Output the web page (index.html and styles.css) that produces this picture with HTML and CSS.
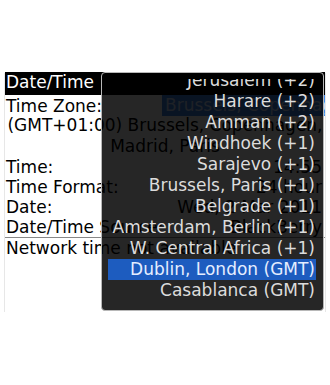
FILE: index.html
```html
<!DOCTYPE html>
<html>
<head>
<meta charset="utf-8">
<link rel="stylesheet" href="styles.css">
</head>
<body>
<div class="screen">
  <div class="title">Date/Time</div>
  <div class="row tz">
    <span class="label">Time Zone:</span>
    <span class="field">Brussels, Copenhagen, Madrid</span>
  </div>
  <div class="desc">(GMT+01:00) Brussels, Copenhagen, Madrid, Paris</div>
  <div class="row"><span class="label">Time:</span><span class="value">14:55</span></div>
  <div class="row"><span class="label">Time Format:</span><span class="value">24 hour</span></div>
  <div class="row"><span class="label">Date:</span><span class="value">Wed, 2 Mar 2011</span></div>
  <div class="row sep"><span class="label">Date/Time Source:</span><span class="value">BlackBerry</span></div>
  <div class="row"><span class="label">Network time not available</span></div>

  <div class="popup">
    <ul class="list">
      <li>Jerusalem (+2)</li>
      <li>Harare (+2)</li>
      <li>Amman (+2)</li>
      <li>Windhoek (+1)</li>
      <li>Sarajevo (+1)</li>
      <li>Brussels, Paris (+1)</li>
      <li>Belgrade (+1)</li>
      <li>Amsterdam, Berlin (+1)</li>
      <li>W. Central Africa (+1)</li>
      <li class="selected">Dublin, London (GMT)</li>
      <li>Casablanca (GMT)</li>
    </ul>
  </div>
</div>
</body>
</html>
```
FILE: styles.css
```css
html, body {
  margin: 0;
  padding: 0;
  background: #fff;
}
body {
  padding: 72px 0 0 5px;
  font-family: "DejaVu Sans", sans-serif;
  font-size: 17px;
  color: #000;
}
.screen {
  position: relative;
  width: 320px;
  height: 240px;
  background: #fff;
  overflow: hidden;
  box-shadow: 0 1px 1px rgba(0, 0, 0, 0.55);
}
.title {
  height: 23px;
  line-height: 20px;
  background: #000;
  color: #fff;
  padding-left: 1px;
}
.row {
  display: flex;
  justify-content: space-between;
  line-height: 20px;
  height: 20px;
  padding: 0 3px 0 0;
  white-space: nowrap;
}
.label {
  padding-left: 1px;
}
.value {
  text-align: right;
}
.tz {
  height: 21px;
  line-height: 21px;
  padding-right: 0;
}
.tz .label {
  padding-top: 1px;
}
.field {
  width: 163px;
  background: #3f86e8;
  color: #c8dcff;
  overflow: hidden;
  padding-left: 3px;
  box-sizing: border-box;
}
.desc {
  text-align: center;
  line-height: 21px;
  margin-top: -1px;
}
.sep {
  border-bottom: 1px solid #888;
}
.popup {
  position: absolute;
  left: 96px;
  top: 0;
  width: 223px;
  height: 239px;
  box-sizing: border-box;
  border: 1px solid #b8b8b8;
  border-radius: 4px;
  background: rgba(0, 0, 0, 0.85);
  padding: 6px 7px 0 6px;
  overflow: hidden;
}
.list {
  list-style: none;
  margin: 0;
  padding: 0;
  height: 231px;
  overflow: hidden;
}
.list li {
  height: 21px;
  line-height: 21px;
  text-align: right;
  padding-right: 1px;
  color: #dcdcdc;
  white-space: nowrap;
}
.list li:first-child {
  margin-top: -9px;
}
.list li.selected {
  background: #1d5cbf;
  color: #e4eeff;
}
```
